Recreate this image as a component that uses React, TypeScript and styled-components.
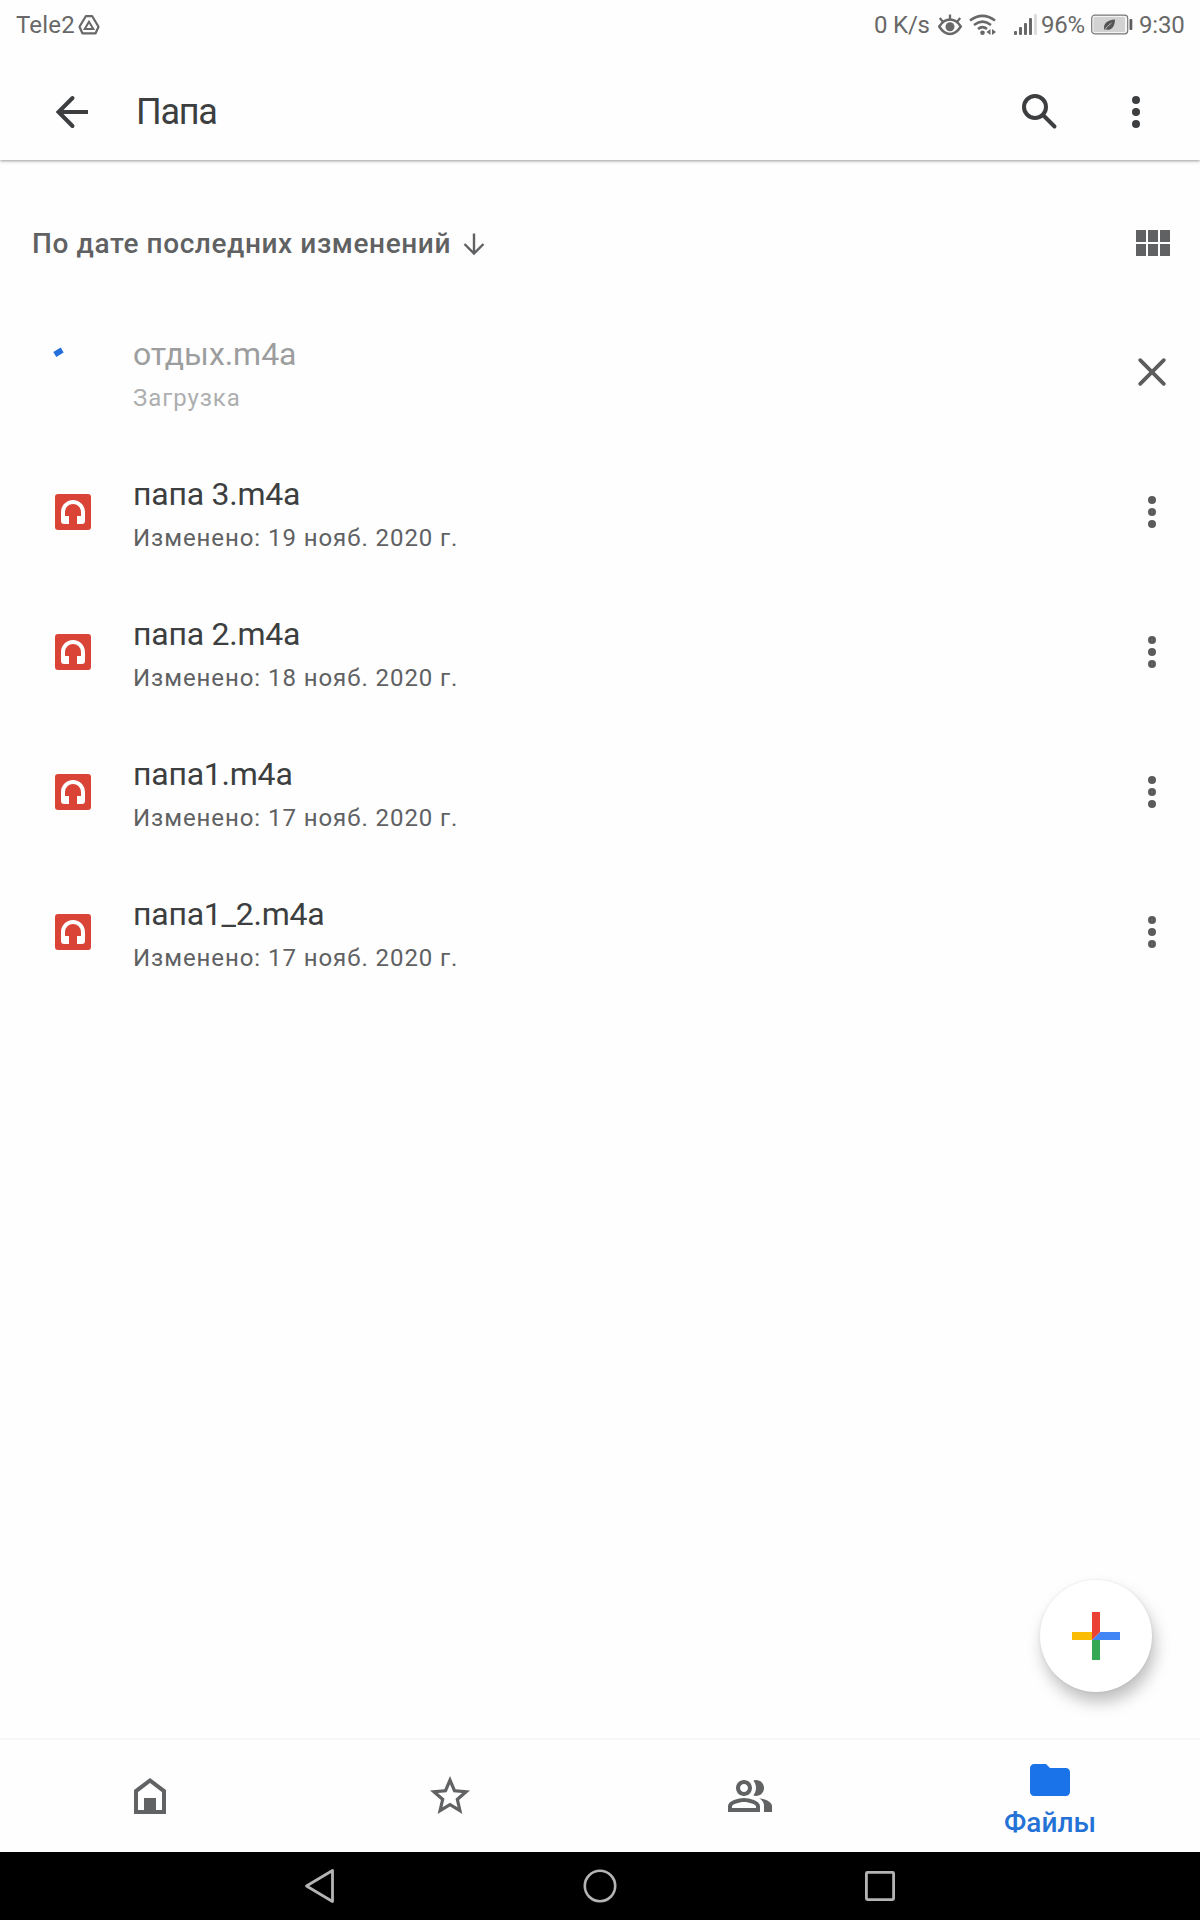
import React from "react";
import styled, { createGlobalStyle } from "styled-components";

const Global = createGlobalStyle`
  body { margin: 0; background: #fefefe; }
  * { box-sizing: border-box; }
  button { border: 0; padding: 0; margin: 0; background: none; font: inherit; color: inherit; }
`;

const Screen = styled.div`
  width: 1200px;
  height: 1920px;
  display: flex;
  flex-direction: column;
  background: #fefefe;
  font-family: Roboto, "Liberation Sans", sans-serif;
  overflow: hidden;
`;

const StatusBar = styled.div`
  height: 48px;
  flex: none;
  display: flex;
  align-items: center;
  justify-content: space-between;
  padding: 2px 16px 0 16px;
  font-size: 24px;
  line-height: 28px;
  color: #686868;
`;

const StatusGroup = styled.div`
  display: flex;
  align-items: center;
`;

const StatusText = styled.span<{ $width: number; $ml?: number; $spacing?: number }>`
  width: ${(p) => p.$width}px;
  margin-left: ${(p) => p.$ml ?? 0}px;
  letter-spacing: ${(p) => p.$spacing ?? 0}px;
  white-space: nowrap;
`;

const StatusIcon = styled.svg<{ $ml?: number }>`
  display: block;
  flex: none;
  margin-left: ${(p) => p.$ml ?? 0}px;
`;

const AppBar = styled.header`
  height: 112px;
  flex: none;
  display: flex;
  align-items: center;
  padding: 16px 40px 0 48px;
  color: #3c3e40;
  box-shadow: 0 1px 3px rgba(0, 0, 0, 0.4);
  clip-path: inset(0 0 -8px 0);
`;

const Title = styled.h1`
  flex: 1;
  margin: 0 0 0 40px;
  font-size: 36px;
  line-height: 48px;
  font-weight: 400;
  letter-spacing: -1.3px;
`;

const IconButton = styled.button<{ $ml?: number }>`
  width: 48px;
  height: 48px;
  flex: none;
  margin-left: ${(p) => p.$ml ?? 0}px;
  svg { display: block; }
`;

const Content = styled.main`
  flex: 1;
  display: flex;
  flex-direction: column;
  padding-top: 60px;
`;

const SortRow = styled.div`
  height: 48px;
  display: flex;
  align-items: center;
  justify-content: space-between;
  padding: 0 24px 0 32px;
  color: #5f6163;
`;

const SortButton = styled.button`
  display: flex;
  align-items: center;
  gap: 12px;
  font-size: 28px;
  line-height: 40px;
  font-weight: 500;
  letter-spacing: 0.6px;
  white-space: nowrap;
`;

const List = styled.ul`
  list-style: none;
  margin: 34px 0 0;
  padding: 0;
`;

const Row = styled.li`
  height: 140px;
  display: grid;
  grid-template-columns: 36px 1fr 48px;
  column-gap: 42px;
  align-items: center;
  padding: 0 24px 0 55px;
  color: #5c5c5c;
`;

const FileText = styled.div<{ $pending?: boolean }>`
  padding-top: 8px;
  letter-spacing: ${(p) => (p.$pending ? -0.05 : -0.23)}px;
  opacity: ${(p) => (p.$pending ? 0.5 : 1)};
`;

const FileName = styled.div`
  font-size: 32px;
  line-height: 44px;
  color: #3c3e40;
`;

const FileMeta = styled.div`
  font-size: 24px;
  line-height: 44px;
  letter-spacing: 0.93px;
  color: #5f6163;
`;

const Audio = styled.div`
  width: 36px;
  height: 36px;
  border-radius: 3px;
  background: #da4437;
  svg { display: block; }
`;

const FabButton = styled.button`
  position: absolute;
  right: 48px;
  top: -160px;
  width: 112px;
  height: 112px;
  border-radius: 50%;
  background: #fff;
  display: grid;
  place-items: center;
  box-shadow: 0 0 3px rgba(0, 0, 0, 0.08), 3px 10px 16px rgba(0, 0, 0, 0.25);
`;

const BottomNav = styled.nav`
  position: relative;
  height: 114px;
  flex: none;
  display: grid;
  grid-template-columns: repeat(4, 1fr);
  border-top: 2px solid #f7f7f7;
  color: #616263;
`;

const NavItem = styled.button<{ $active?: boolean }>`
  display: flex;
  flex-direction: column;
  align-items: center;
  justify-content: flex-start;
  padding-top: ${(p) => (p.$active ? 16 : 32)}px;
  color: ${(p) => (p.$active ? "#1a73e8" : "inherit")};
  svg { display: block; flex: none; }
`;

const NavLabel = styled.span`
  margin-top: 1px;
  font-size: 28px;
  line-height: 36px;
  font-weight: 500;
  color: #2472d6;
`;

const SystemNav = styled.div`
  height: 68px;
  flex: none;
  background: #000;
  display: flex;
  justify-content: center;
  align-items: center;
  gap: 240px;
  svg { display: block; }
`;

const Glyph = ({ d }: { d: string }) => (
  <svg width="48" height="48" viewBox="0 0 24 24" fill="currentColor">
    <path d={d} />
  </svg>
);

const Dots = () => (
  <svg width="48" height="48" viewBox="0 0 48 48" fill="currentColor">
    <circle cx="24" cy="12" r="4" />
    <circle cx="24" cy="24" r="4" />
    <circle cx="24" cy="36" r="4" />
  </svg>
);

const HomeIcon = () => (
  <svg width="48" height="48" viewBox="0 0 48 48" fill="none">
    <path d="M10 19.1V40h28V19.1L24 8.5Z" stroke="currentColor" strokeWidth="4" />
    <path d="M18 26h12v14H18z" fill="currentColor" />
  </svg>
);

const files = [
  { name: "папа 3.m4a", date: "Изменено: 19 нояб. 2020 г." },
  { name: "папа 2.m4a", date: "Изменено: 18 нояб. 2020 г." },
  { name: "папа1.m4a", date: "Изменено: 17 нояб. 2020 г." },
  { name: "папа1_2.m4a", date: "Изменено: 17 нояб. 2020 г." },
];

const STAR =
  "M22 9.24l-7.19-.62L12 2 9.19 8.63 2 9.24l5.46 4.73L5.82 21 12 17.27 18.18 21l-1.63-7.03L22 9.24zM12 15.4l-3.76 2.27 1-4.28-3.32-2.88 4.38-.38L12 6.1l1.71 4.04 4.38.38-3.32 2.88 1 4.28L12 15.4z";
const PEOPLE =
  "M16.67 13.13C18.04 14.06 19 15.32 19 17v3h4v-3c0-2.18-3.57-3.47-6.33-3.87zM15 12c2.21 0 4-1.79 4-4s-1.79-4-4-4c-.47 0-.91.1-1.33.24C14.5 5.27 15 6.58 15 8s-.5 2.73-1.33 3.76c.42.14.86.24 1.33.24zM9 12c2.21 0 4-1.79 4-4s-1.79-4-4-4-4 1.79-4 4 1.79 4 4 4zm0-6c1.1 0 2 .9 2 2s-.9 2-2 2-2-.9-2-2 .9-2 2-2zM9 13c-2.67 0-8 1.34-8 4v3h16v-3c0-2.66-5.33-4-8-4zm6 5H3v-.99C3.2 16.29 6.3 15 9 15s5.8 1.29 6 2v1z";
const FOLDER =
  "M10 4H4c-1.1 0-1.99.9-1.99 2L2 18c0 1.1.9 2 2 2h16c1.1 0 2-.9 2-2V8c0-1.1-.9-2-2-2h-8l-2-2z";
const GRID =
  "M4 11h5V5H4v6zm0 7h5v-6H4v6zm6 0h5v-6h-5v6zm6 0h5v-6h-5v6zm-6-7h5V5h-5v6zm6-6v6h5V5h-5z";

export default function App() {
  return (
    <Screen>
      <Global />
      <StatusBar>
        <StatusGroup>
          <StatusText $width={62} $spacing={0.2}>Tele2</StatusText>
          <StatusIcon width="22" height="22" viewBox="0 0 22 22" fill="none" stroke="currentColor" strokeLinejoin="round">
            <path d="M7.8 2.2h6.4l6.300 10.500-2.900 6.600H4.400l-2.900-6.600Z" strokeWidth="2.200" />
            <path d="M11 7.800l4.300 7.200H6.700Z" strokeWidth="2" strokeLinejoin="miter" />
          </StatusIcon>
        </StatusGroup>
        <StatusGroup>
          <StatusText $width={64} $spacing={-0.2}>0 K/s</StatusText>
          <StatusIcon width="24" height="22" viewBox="0 0 24 22" fill="none" stroke="currentColor">
            <path d="M1.200 12.500Q6 5.600 12 5.600T22.800 12.500Q18 20 12 20T1.200 12.500Z" strokeWidth="2.500" />
            <circle cx="12" cy="12.700" r="4.500" fill="currentColor" stroke="none" />
            <path d="M12 .500v6M1.800 4l3.700 4.400M22.200 4l-3.700 4.400" strokeWidth="2.300" />
          </StatusIcon>
          <StatusIcon $ml={7} width="28" height="22" viewBox="0 0 28 22" fill="none" stroke="currentColor">
            <path d="M1 6.600Q13.500-2.900 26 6.600" strokeWidth="2.500" />
            <path d="M5 11Q13.500 4.200 22 11" strokeWidth="2.500" />
            <path d="M9 15Q13.500 11.200 18 15" strokeWidth="2.500" />
            <circle cx="13.500" cy="18.800" r="2.300" fill="currentColor" stroke="none" />
            <path d="M21.500 15v6l-4-3ZM23 15v6l4-3Z" fill="currentColor" stroke="none" />
          </StatusIcon>
          <StatusIcon $ml={17} width="24" height="22" viewBox="0 0 24 22" fill="currentColor">
            <rect x="0" y="17" width="3" height="4" rx="1" />
            <rect x="5" y="13" width="3" height="8" rx="1" />
            <rect x="10" y="9" width="3" height="12" rx="1" />
            <rect x="15" y="4" width="3" height="17" rx="1" />
            <rect x="20" y="0" width="3" height="21" rx="1" fill="#dcdcdc" />
          </StatusIcon>
          <StatusText $width={46} $ml={3} $spacing={-0.3}>96%</StatusText>
          <StatusIcon $ml={4} width="42" height="22" viewBox="0 0 42 22">
            <rect x="0.700" y="1.200" width="36" height="18.600" rx="3" fill="#f4f4f4" stroke="#777" strokeWidth="1.200" />
            <rect x="2.500" y="3" width="31.500" height="15" rx="1" fill="#d2d2d2" />
            <rect x="38.500" y="5" width="2.800" height="11" rx="1" fill="#5c5c5c" />
            <path d="M13.500 16.500C11.500 10 16 6 24 5.500C24 13 20 17 15 15.500Z" fill="#555" />
            <path d="M13 17Q16 12 20.500 9" stroke="#d2d2d2" strokeWidth="0.800" fill="none" />
          </StatusIcon>
          <StatusText $width={45} $ml={6} $spacing={-0.2}>9:30</StatusText>
        </StatusGroup>
      </StatusBar>

      <AppBar>
        <IconButton aria-label="Назад">
          <svg width="48" height="48" viewBox="0 0 48 48" fill="none" stroke="currentColor" strokeWidth="4">
            <path d="M40 24H12" />
            <path d="M24.500 10L10.500 24l14 14" strokeLinecap="round" />
          </svg>
        </IconButton>
        <Title>Папа</Title>
        <IconButton aria-label="Поиск">
          <svg width="48" height="48" viewBox="0 0 48 48" fill="none" stroke="currentColor" strokeWidth="4">
            <circle cx="19" cy="19" r="11" />
            <path d="M28.500 28.500L38.500 38.500" strokeLinecap="round" />
          </svg>
        </IconButton>
        <IconButton $ml={48} aria-label="Ещё">
          <Dots />
        </IconButton>
      </AppBar>

      <Content>
        <SortRow>
          <SortButton>
            По дате последних изменений
            <svg width="22" height="24" viewBox="0 0 22 24" fill="none" stroke="currentColor" strokeWidth="2.400">
              <path d="M11 1.500V21M1.500 12l9.500 9.500L20.500 12" />
            </svg>
          </SortButton>
          <IconButton aria-label="Сетка">
            <Glyph d={GRID} />
          </IconButton>
        </SortRow>
        <List>
          <Row>
            <svg width="36" height="36" viewBox="0 0 36 36" overflow="visible">
              <path d="M-0.200 0.400L7.200 -3.900" stroke="#246fdb" strokeWidth="5.800" />
            </svg>
            <FileText $pending>
              <FileName>отдых.m4a</FileName>
              <FileMeta>Загрузка</FileMeta>
            </FileText>
            <IconButton aria-label="Отмена">
              <svg width="48" height="48" viewBox="0 0 48 48" stroke="currentColor" strokeWidth="3.800" strokeLinecap="round">
                <path d="M12.200 12.200l23.600 23.600M35.800 12.200L12.200 35.800" />
              </svg>
            </IconButton>
          </Row>
          {files.map((f) => (
            <Row key={f.name}>
              <Audio>
                <svg width="36" height="36" viewBox="0 0 36 36" fill="#fff">
                  <path d="M18 6C11.400 6 6 11.400 6 18v9a3 3 0 0 0 3 3h5v-8h-4v-4a8 8 0 0 1 16 0v4h-4v8h5a3 3 0 0 0 3-3v-9C30 11.400 24.600 6 18 6Z" />
                </svg>
              </Audio>
              <FileText>
                <FileName>{f.name}</FileName>
                <FileMeta>{f.date}</FileMeta>
              </FileText>
              <IconButton aria-label="Ещё">
                <Dots />
              </IconButton>
            </Row>
          ))}
        </List>
      </Content>

      <BottomNav>
        <FabButton aria-label="Создать">
          <svg width="48" height="48" viewBox="0 0 48 48">
            <path d="M0 20h20v8H0z" fill="#fbbc05" />
            <path d="M20 28h8v20h-8z" fill="#34a853" />
            <path d="M28 20h20v8H20z" fill="#4285f4" />
            <path d="M20 0h8v20l-8 8z" fill="#ea4335" />
          </svg>
        </FabButton>
        <NavItem><HomeIcon /></NavItem>
        <NavItem><Glyph d={STAR} /></NavItem>
        <NavItem><Glyph d={PEOPLE} /></NavItem>
        <NavItem $active>
          <Glyph d={FOLDER} />
          <NavLabel>Файлы</NavLabel>
        </NavItem>
      </BottomNav>

      <SystemNav>
        <svg width="40" height="40" viewBox="0 0 40 40" fill="none" stroke="#b4b4b4" strokeWidth="2.800" strokeLinejoin="round">
          <path d="M32.500 4.500v31L6.500 20Z" />
        </svg>
        <svg width="40" height="40" viewBox="0 0 40 40" fill="none" stroke="#b4b4b4" strokeWidth="2.600">
          <circle cx="20" cy="20" r="15.200" />
        </svg>
        <svg width="40" height="40" viewBox="0 0 40 40" fill="none" stroke="#b4b4b4" strokeWidth="2.800">
          <rect x="6.400" y="6.400" width="27.200" height="27.200" rx="1" />
        </svg>
      </SystemNav>
    </Screen>
  );
}
